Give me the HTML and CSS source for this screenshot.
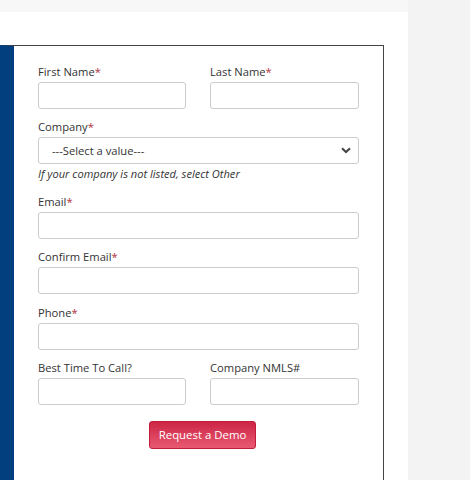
FILE: index.html
```html
<!DOCTYPE html>
<html>
<head>
<meta charset="utf-8">
<link rel="stylesheet" href="styles.css">
</head>
<body>
<div class="page">
  <div class="panel">
    <div class="box">
      <form class="form">
        <div class="row">
          <div class="field">
            <label class="label">First Name<span class="req">*</span></label>
            <input class="input" type="text">
          </div>
          <div class="field">
            <label class="label">Last Name<span class="req">*</span></label>
            <input class="input" type="text">
          </div>
        </div>
        <div class="field field-select">
          <label class="label">Company<span class="req">*</span></label>
          <div class="select">
            <span class="select-text">---Select a value---</span>
            <svg class="chev" width="10" height="7" viewBox="0 0 10 7"><path d="M1 1.2 L5 5 L9 1.2" fill="none" stroke="#444" stroke-width="2"/></svg>
          </div>
          <div class="hint">If your company is not listed, select Other</div>
        </div>
        <div class="field">
          <label class="label">Email<span class="req">*</span></label>
          <input class="input" type="text">
        </div>
        <div class="field">
          <label class="label">Confirm Email<span class="req">*</span></label>
          <input class="input" type="text">
        </div>
        <div class="field">
          <label class="label">Phone<span class="req">*</span></label>
          <input class="input" type="text">
        </div>
        <div class="row">
          <div class="field">
            <label class="label">Best Time To Call?</label>
            <input class="input" type="text">
          </div>
          <div class="field">
            <label class="label">Company NMLS#</label>
            <input class="input" type="text">
          </div>
        </div>
        <div class="actions">
          <button class="btn" type="button">Request a Demo</button>
        </div>
      </form>
    </div>
  </div>
</div>
</body>
</html>
```

FILE: styles.css
```css
html, body {
  margin: 0;
  padding: 0;
  height: 100%;
}
body {
  background: #f3f3f3;
  font-family: "Open Sans", "Liberation Sans", sans-serif;
  color: #333;
  overflow: hidden;
}
.page {
  width: 408px;
  height: 100%;
  background: #f7f7f7;
  padding-top: 12px;
  box-sizing: border-box;
}
.panel {
  background: #fff;
  height: 100%;
  padding-top: 33px;
  box-sizing: border-box;
}
.box {
  width: 384px;
  height: 100%;
  box-sizing: border-box;
  border-top: 1px solid #444;
  border-right: 1px solid #444;
  border-left: 14px solid #013f7e;
  padding: 17px 24px 0 24px;
}
.form {
  display: flex;
  flex-direction: column;
}
.row {
  display: grid;
  grid-template-columns: 148px 149px;
  column-gap: 24px;
}
.field {
  display: flex;
  flex-direction: column;
  margin-bottom: 9.3px;
}
.label {
  font-size: 11.2px;
  line-height: 17px;
  margin-bottom: 2px;
  color: #333;
}
.req {
  color: #b0353e;
}
.input {
  height: 27px;
  box-sizing: border-box;
  border: 1px solid #ccc;
  border-radius: 3px;
  background: #fff;
  margin: 0;
  padding: 0 8px;
  font: inherit;
  width: 100%;
}
.select {
  height: 27px;
  box-sizing: border-box;
  border: 1px solid #ccc;
  border-radius: 3px;
  background: #fff;
  display: flex;
  align-items: center;
  justify-content: space-between;
  padding: 0 7px 0 13px;
}
.select-text {
  font-size: 11.2px;
  color: #333;
}
.chev {
  display: block;
}
.hint {
  font-size: 11.1px;
  font-style: italic;
  line-height: 17px;
  color: #333;
  margin-top: 0.5px;
  margin-bottom: 2px;
}
.actions {
  display: flex;
  justify-content: center;
  padding-left: 8px;
  margin-top: 6.5px;
}
.btn {
  width: 107px;
  height: 28px;
  box-sizing: border-box;
  border: 1px solid #c41a3c;
  border-radius: 3px;
  background: linear-gradient(#cd2546, #e85a72);
  color: #fff;
  font-family: "Open Sans", "Liberation Sans", sans-serif;
  font-size: 11.4px;
  padding: 0;
  cursor: pointer;
}
```
